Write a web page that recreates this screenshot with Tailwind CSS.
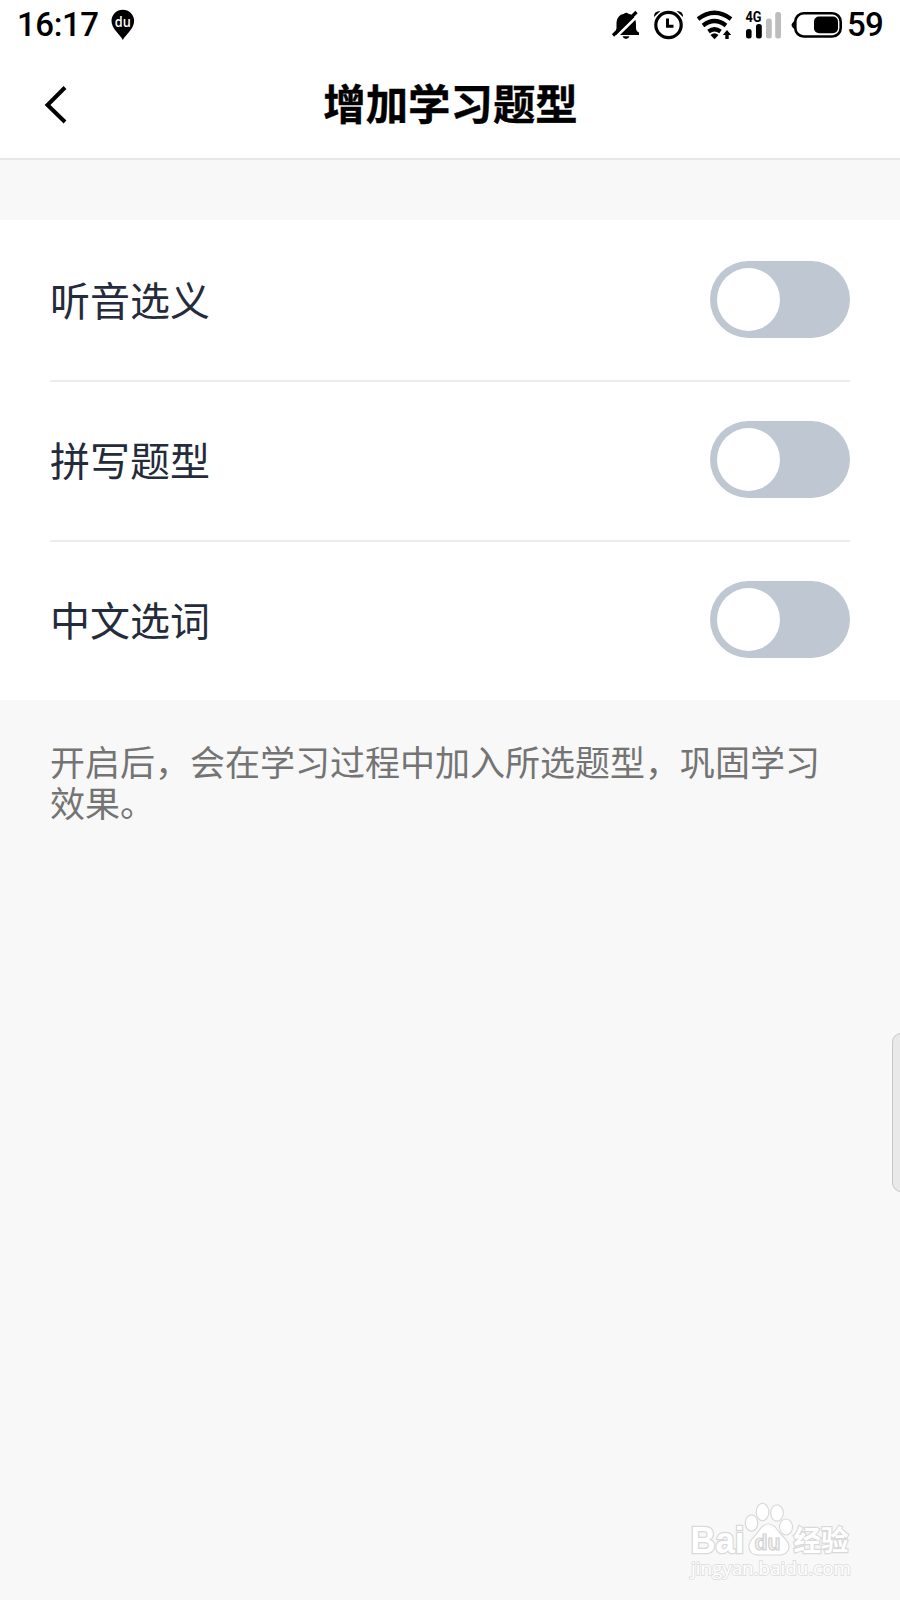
<!DOCTYPE html>
<html lang="zh-CN">

<head>
  <meta charset="UTF-8" />
  <meta name="viewport" content="width=device-width, initial-scale=1.0" />
  <title>增加学习题型</title>
  <script src="https://cdn.jsdelivr.net/npm/@tailwindcss/browser@4"></script>
</head>

<body class="bg-[#f8f8f8] font-['Noto_Sans_CJK_SC',sans-serif]">
  <div class="relative w-[900px] h-[1600px] overflow-hidden">

    <!-- status bar -->
    <div class="h-[50px] bg-white flex items-center px-[17px] text-black font-['Roboto',sans-serif] font-medium text-[33px] leading-[50px]">
      <span class="w-[82px] whitespace-nowrap tracking-[-0.4px]">16:17</span>
      <svg class="ml-[12px] w-[24px] h-[50px]" viewBox="111 0 24 50">
        <path d="M122.800 40C120 34 111.500 29 111.500 21a11.300 11.300 0 0 1 22.600 0C134.100 29 126 34 122.800 40z" />
        <text x="114.800" y="26.500" fill="#fff" font-family="Open Sans, sans-serif" font-weight="600" font-size="13.500" textLength="16" lengthAdjust="spacingAndGlyphs">du</text>
      </svg>
      <svg class="ml-auto w-[170px] h-[50px]" viewBox="611 0 170 50">
        <!-- muted bell -->
        <path d="M616.500 28V24c0-6 3-9.500 7.500-10.300q2.200-2 4.400 0C633 14.500 636 18 636 24V28q0 3 3 4.500V35H614.500v-2.500q2-1.500 2-4.500z M622.500 36.200h7q-1 2.800-3.500 2.800t-3.500-2.800z" />
        <path d="M615.500 37.500L640 13.500" stroke="#fff" stroke-width="2.600" fill="none" />
        <path d="M613 35.500L636.500 12" stroke="#000" stroke-width="3.200" fill="none" />
        <!-- alarm clock -->
        <circle cx="668.500" cy="25" r="12.700" fill="none" stroke="#000" stroke-width="3.200" />
        <path d="M667.500 18.500v7.700h6" fill="none" stroke="#000" stroke-width="3" />
        <path d="M654 17q-.5-6 6.500-6zM683 17q.5-6-6.500-6z" />
        <!-- wifi -->
        <g fill="none" stroke="#000" stroke-width="4.200">
          <path d="M698 19q16.500-12.500 33 0" />
          <path d="M703 25.500q11.500-9 23 0" />
          <path d="M708.500 31.500q6-4.500 12 0" />
        </g>
        <path d="M710.500 35q4-3.500 8 0l-4 4.300z" />
        <path d="M727 30l4.200 5h-2.500v4h-3.400v-4h-2.500z" />
        <!-- signal -->
        <text x="745.500" y="21.800" font-family="Roboto, sans-serif" font-weight="700" font-size="14" textLength="16" lengthAdjust="spacingAndGlyphs">4G</text>
        <rect x="746" y="29" width="5.600" height="9.500" rx="2.500" />
        <rect x="756" y="24" width="5.800" height="14.500" rx="2.500" />
        <rect x="766" y="18.500" width="5.800" height="20" rx="2.500" fill="#bdbdbd" />
        <rect x="775.200" y="12" width="5.800" height="26.500" rx="2.500" fill="#bdbdbd" />
      </svg>
      <svg class="ml-[10px] w-[52px] h-[50px]" viewBox="791 0 52 50">
        <path d="M796 19.500q-4.500 3.500-4.500 5.500t4.500 5.500z" />
        <rect x="795.300" y="13.300" width="45.400" height="23.200" rx="8.500" fill="none" stroke="#000" stroke-width="2.600" />
        <rect x="814" y="16.600" width="24" height="16.600" rx="5" />
      </svg>
      <span class="ml-[4px] w-[36px] whitespace-nowrap tracking-[-0.7px]">59</span>
    </div>

    <!-- title bar -->
    <div class="relative h-[110px] bg-white border-b-2 border-[#e8e8e8] flex items-center justify-center">
      <svg class="absolute left-[40px] top-[30px] w-[32px] h-[50px]" viewBox="0 0 32 50" fill="none" stroke="#000" stroke-width="4">
        <path d="M25 7.500L7.500 25L25 42" />
      </svg>
      <h1 class="pb-[4px] pl-px text-[42.400px] leading-[60px] font-bold text-black [-webkit-text-stroke:0.4px_#000]">增加学习题型</h1>
    </div>

    <!-- switches -->
    <div class="mt-[60px] h-[480px] bg-white px-[50px]">
      <div class="h-[162px] pb-px flex items-center justify-between border-b-2 border-[#ededed]">
        <span class="pb-px text-[40px] leading-[60px] text-[#242b3a]">听音选义</span>
        <span class="w-[140px] h-[77px] rounded-full bg-[#bfc7d3] p-[7px] flex items-center"><i class="size-[63px] rounded-full bg-white"></i></span>
      </div>
      <div class="h-[160px] pb-[3px] flex items-center justify-between border-b-2 border-[#ededed]">
        <span class="pb-px text-[40px] leading-[60px] text-[#242b3a]">拼写题型</span>
        <span class="w-[140px] h-[77px] rounded-full bg-[#bfc7d3] p-[7px] flex items-center"><i class="size-[63px] rounded-full bg-white"></i></span>
      </div>
      <div class="h-[158px] pb-[3px] flex items-center justify-between">
        <span class="pb-px text-[40px] leading-[60px] text-[#242b3a]">中文选词</span>
        <span class="w-[140px] h-[77px] rounded-full bg-[#bfc7d3] p-[7px] flex items-center"><i class="size-[63px] rounded-full bg-white"></i></span>
      </div>
    </div>

    <p class="mt-[40px] px-[50px] text-[35px] leading-[41px] text-[#747474]">开启后，会在学习过程中加入所选题型，巩固学习效果。</p>

    <!-- edge handle -->
    <div class="absolute left-[892px] top-[1033px] w-[20px] h-[159px] rounded-[9px] border border-[#c8c8c8] bg-[#e9e9e9]"></div>

    <!-- watermark -->
    <svg class="absolute left-[670px] top-[1490px] w-[200px] h-[100px]" viewBox="0 0 200 100" fill="#fff" stroke="#d9d9d9" stroke-width="1.200">
      <g font-family="Liberation Sans, sans-serif" font-weight="700">
        <text x="20.500" y="63" font-size="36" textLength="54" lengthAdjust="spacingAndGlyphs" paint-order="stroke" stroke-width="2.600">Bai</text>
        <ellipse cx="81.500" cy="33" rx="6.200" ry="8.200" />
        <ellipse cx="92.500" cy="22" rx="6.300" ry="8.600" />
        <ellipse cx="107" cy="23" rx="6.300" ry="8.200" />
        <ellipse cx="116" cy="37" rx="6.500" ry="8" />
        <path d="M79 57c-1-7 7-11 10.500-17 5-8 13-8 18 0 3.500 6 12 10 11.500 17-.5 6-6 8.500-11 8H90c-6 .5-10.500-2-11-8z" />
        <text x="84.500" y="60" font-size="22" textLength="26" lengthAdjust="spacingAndGlyphs" fill="#f3f3f3" stroke="#d2d2d2">du</text>
      </g>
      <text x="123.500" y="61" font-family="Noto Sans CJK SC, sans-serif" font-weight="700" font-size="28" textLength="55" lengthAdjust="spacingAndGlyphs" paint-order="stroke" stroke-width="2.400">经验</text>
      <text x="21" y="84.500" font-family="Open Sans, sans-serif" font-size="18.500" textLength="160" lengthAdjust="spacingAndGlyphs" paint-order="stroke" stroke="#e0e0e0" stroke-width="1.800">jingyan.baidu.com</text>
    </svg>
  </div>
</body>

</html>
